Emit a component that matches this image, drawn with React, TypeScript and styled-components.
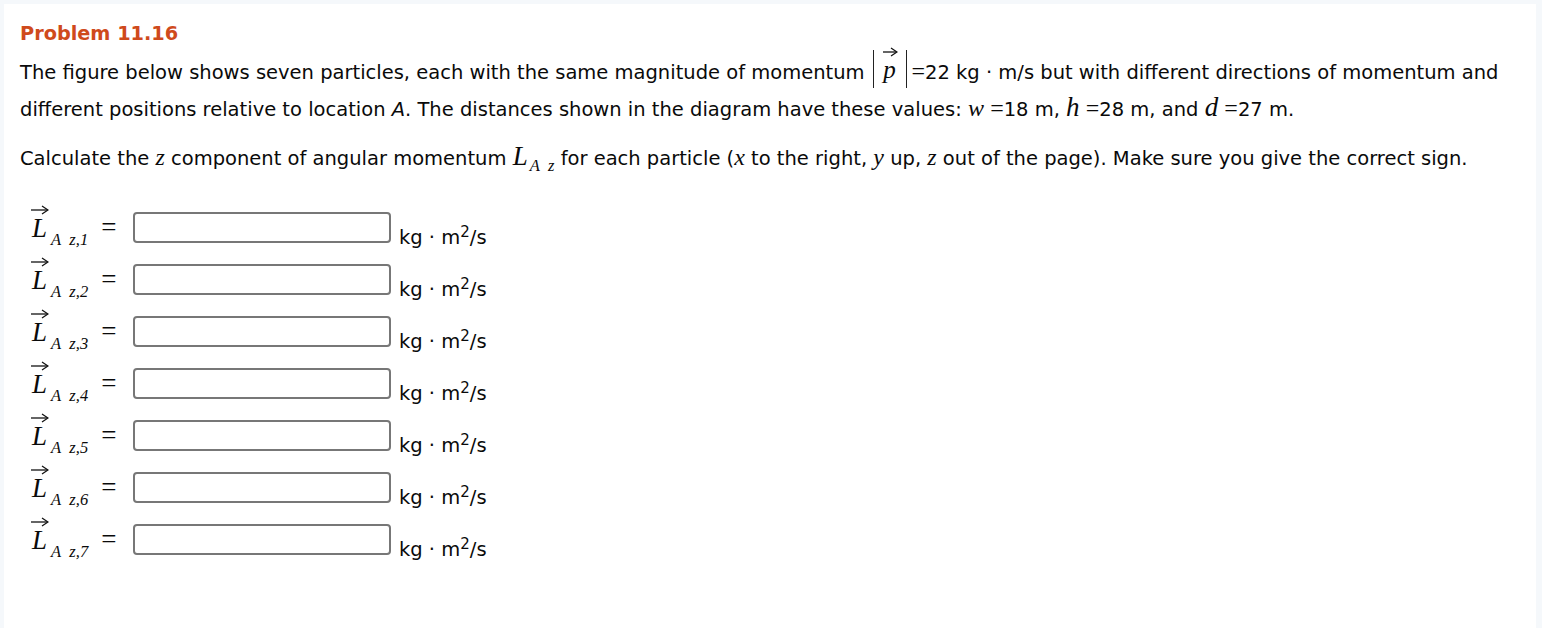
import React from 'react';
import styled, { createGlobalStyle } from 'styled-components';

const GlobalStyle = createGlobalStyle`
  html, body {
    margin: 0;
    padding: 0;
    background: #f5f8fb;
  }
  body {
    font-family: 'DejaVu Sans', Verdana, sans-serif;
    color: #0a0a0a;
  }
`;

const Page = styled.div`
  padding: 4px 6px 0 4px;
  height: 628px;
  box-sizing: border-box;
  overflow: hidden;
`;

const Panel = styled.div`
  background: #ffffff;
  height: 100%;
  padding: 20px 16px 0 16px;
  box-sizing: border-box;
`;

const Title = styled.h2`
  margin: 0 0 10px 0;
  font-size: 19.3px;
  font-weight: bold;
  color: #cf4a1c;
  line-height: 20px;
`;

const Paragraph = styled.p<{ $gap?: number }>`
  margin: 0 0 ${(p) => p.$gap ?? 0}px 0;
  font-size: 19.5px;
  line-height: 35px;
  max-width: 1495px;
`;

const MathVar = styled.span<{ $size?: number }>`
  font-family: 'Liberation Serif', 'Times New Roman', serif;
  font-style: italic;
  font-size: ${(p) => p.$size ?? 24}px;
  line-height: 1;
`;

const MathUpright = styled.span`
  font-family: 'Liberation Serif', 'Times New Roman', serif;
  font-size: 24px;
  line-height: 1;
`;

const Italic = styled.span`
  font-style: italic;
`;

const Abs = styled.span`
  display: inline-flex;
  align-items: flex-end;
  vertical-align: middle;
  height: 38px;
  margin: 0 5px 0 8px;
  padding: 0 8px 6px 8px;
  box-sizing: border-box;
  border-left: 1.3px solid #222;
  border-right: 1.3px solid #222;
  position: relative;
  top: -4px;
`;

const VecWrap = styled.span`
  display: inline-flex;
  flex-direction: column;
  align-items: center;
  vertical-align: baseline;
  line-height: 1;
`;

const Arrow = ({ width }: { width: number }) => (
  <svg width={width} height={10} viewBox={`0 0 ${width} 10`} style={{ display: 'block' }}>
    <line x1={1} y1={5} x2={width - 1.5} y2={5} stroke="#111" strokeWidth={1.3} />
    <path
      d={`M${width - 7} 1 L${width - 1} 5 L${width - 7} 9`}
      fill="none"
      stroke="#111"
      strokeWidth={1.3}
    />
  </svg>
);

const Sub = styled.span<{ $size?: number }>`
  font-family: 'Liberation Serif', 'Times New Roman', serif;
  font-style: italic;
  font-size: ${(p) => p.$size ?? 16.5}px;
  line-height: 1;
  position: relative;
  top: 6px;
  margin-left: 2px;
`;

const Rows = styled.div`
  display: flex;
  flex-direction: column;
  gap: 21px;
  margin-top: 36px;
  padding-left: 10px;
`;

const Row = styled.div`
  display: flex;
  align-items: center;
  height: 31px;
`;

const Label = styled.div`
  width: 103px;
  display: flex;
  align-items: flex-end;
  white-space: nowrap;
  position: relative;
  top: -4px;
`;

const BigL = styled.span`
  font-family: 'Liberation Serif', 'Times New Roman', serif;
  font-style: italic;
  font-size: 27px;
  line-height: 1;
`;

const Equals = styled.span`
  font-family: 'Liberation Serif', 'Times New Roman', serif;
  font-size: 27px;
  margin-left: 13px;
  line-height: 1;
  position: relative;
  top: -1px;
`;

const Input = styled.input`
  width: 258px;
  height: 31px;
  box-sizing: border-box;
  border: 2px solid #777777;
  border-radius: 4px;
  background: #fff;
  padding: 0 6px;
  font-size: 16px;
  outline: none;
`;

const Unit = styled.span`
  font-size: 19.5px;
  margin-left: 8px;
  align-self: flex-end;
  position: relative;
  top: 6px;
  white-space: nowrap;
`;

const Sup = styled.sup`
  font-size: 15px;
  vertical-align: 7px;
  line-height: 0;
`;

const RowLabel = ({ n }: { n: number }) => (
  <Label>
    <VecWrap>
      <Arrow width={19} />
      <BigL>L</BigL>
    </VecWrap>
    <Sub>
      A&nbsp;&nbsp;z,{n}
    </Sub>
    <Equals>=</Equals>
  </Label>
);

const App: React.FC = () => {
  const particles = [1, 2, 3, 4, 5, 6, 7];

  return (
    <>
      <GlobalStyle />
      <Page>
        <Panel>
          <Title>Problem 11.16</Title>
          <Paragraph $gap={14}>
            The figure below shows seven particles, each with the same magnitude of momentum
            <Abs>
              <VecWrap>
                <Arrow width={16} />
                <MathVar $size={25}>p</MathVar>
              </VecWrap>
            </Abs>
            <MathUpright>=</MathUpright>22 kg · m/s but with different directions of momentum and
            different positions relative to location <Italic>A</Italic>. The distances shown in the
            diagram have these values: <MathVar>w</MathVar> <MathUpright>=</MathUpright>18 m,{' '}
            <MathVar $size={27}>h</MathVar> <MathUpright>=</MathUpright>28 m, and{' '}
            <MathVar $size={27}>d</MathVar> <MathUpright>=</MathUpright>27 m.
          </Paragraph>
          <Paragraph>
            Calculate the <MathVar>z</MathVar> component of angular momentum{' '}
            <MathVar $size={27}>L</MathVar>
            <Sub>A&nbsp;&nbsp;z</Sub> for each particle (<MathVar>x</MathVar> to the right,{' '}
            <MathVar>y</MathVar> up, <MathVar>z</MathVar> out of the page). Make sure you give the
            correct sign.
          </Paragraph>

          <Rows>
            {particles.map((n) => (
              <Row key={n}>
                <RowLabel n={n} />
                <Input type="text" aria-label={`L A z,${n}`} />
                <Unit>
                  kg · m<Sup>2</Sup>/s
                </Unit>
              </Row>
            ))}
          </Rows>
        </Panel>
      </Page>
    </>
  );
};

export default App;
